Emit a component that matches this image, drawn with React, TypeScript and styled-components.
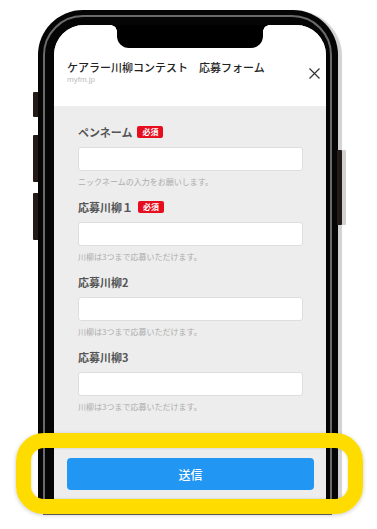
import React from "react";
import styled, { createGlobalStyle } from "styled-components";

const Global = createGlobalStyle`
  html, body { margin: 0; padding: 0; background: #fff; }
  body { font-family: "Noto Sans CJK JP", "Noto Sans", sans-serif; }
  * { box-sizing: border-box; }
`;

const Stage = styled.div`
  position: relative;
  width: 377px;
  height: 529px;
  overflow: hidden;
  padding: 10px 0 0 38px;
`;

const Phone = styled.div`
  position: relative;
  width: 300px;
  height: 495px;
  background: #050505;
  border-radius: 45px 45px 0 0;
  padding: 15px 12px 0 16px;
  box-shadow: 4px 1px 1px #d2d2d2;
  &::before {
    content: "";
    position: absolute;
    inset: 5px 6px -10px 5px;
    border: 2px solid #6a6a6a;
    border-radius: 40px 40px 0 0;
    pointer-events: none;
  }
`;

const SideKey = styled.div<{ $side: "left" | "right"; $top: number; $h: number }>`
  position: absolute;
  top: ${(p) => p.$top}px;
  height: ${(p) => p.$h}px;
  width: 5px;
  background: #231a18;
  ${(p) =>
    p.$side === "left"
      ? "left: -5px; border-radius: 1px 0 0 1px;"
      : "right: -4px; border-radius: 0 1px 1px 0; box-shadow: 4px 0 0 #d0d0d0;"}
`;

const Screen = styled.div`
  position: relative;
  height: 100%;
  background: #ededed;
  border-radius: 30px 30px 0 0;
  overflow: hidden;
  display: flex;
  flex-direction: column;
`;

const Notch = styled.div`
  position: absolute;
  top: 0;
  left: 50%;
  transform: translateX(-50%);
  width: 146px;
  height: 23px;
  background: #000;
  border-radius: 0 0 12px 12px;
  z-index: 2;
  &::before,
  &::after {
    content: "";
    position: absolute;
    top: 0;
    width: 6px;
    height: 6px;
  }
  &::before {
    left: -6px;
    background: radial-gradient(circle at 0 100%, transparent 5.5px, #000 6px);
  }
  &::after {
    right: -6px;
    background: radial-gradient(circle at 100% 100%, transparent 5.5px, #000 6px);
  }
`;

const Header = styled.header`
  height: 81px;
  flex: none;
  background: #fff;
  padding: 35px 6px 0 13px;
`;

const HeaderRow = styled.div`
  display: flex;
  align-items: center;
  justify-content: space-between;
`;

const TitleBlock = styled.div`
  display: flex;
  flex-direction: column;
`;

const Title = styled.h1`
  margin: 0;
  font-size: 11px;
  line-height: 14px;
  font-weight: 500;
  color: #222;
  white-space: nowrap;
`;

const Url = styled.div`
  margin-top: 1px;
  font-family: "Liberation Sans", Arial, sans-serif;
  font-size: 8px;
  line-height: 10px;
  color: #bdbdbd;
`;

const CloseButton = styled.button`
  width: 12px;
  height: 12px;
  padding: 0;
  border: 0;
  background: none;
  display: flex;
  align-items: center;
  justify-content: center;
  margin-top: 2px;
`;

const Form = styled.div`
  padding: 18px 23px 0 24px;
  display: flex;
  flex-direction: column;
  gap: 11px;
`;

const Field = styled.div`
  display: flex;
  flex-direction: column;
`;

const LabelRow = styled.div`
  height: 16px;
  display: flex;
  align-items: center;
  gap: 5px;
  margin-bottom: 7px;
`;

const Label = styled.label`
  font-size: 11px;
  line-height: 16px;
  font-weight: 700;
  color: #555;
`;

const Badge = styled.span`
  height: 12px;
  padding: 0 5px;
  background: #e60d1e;
  color: #fff;
  font-size: 8px;
  line-height: 12px;
  font-weight: 700;
  border-radius: 2px;
`;

const Input = styled.div`
  height: 24px;
  background: #fff;
  border: 1px solid #dedede;
  border-radius: 3px;
`;

const Hint = styled.div`
  margin-top: 5px;
  font-size: 8px;
  line-height: 12px;
  color: #acacac;
`;

const Footer = styled.div`
  margin-top: auto;
  padding: 0 12px 15px 13px;
`;

const SubmitButton = styled.button`
  width: 100%;
  height: 32px;
  border: 0;
  border-radius: 4px;
  background: #2196f3;
  color: #fff;
  font-family: "Noto Sans CJK JP", sans-serif;
  font-size: 12px;
  font-weight: 500;
`;

const Highlight = styled.div`
  position: absolute;
  left: 16px;
  top: 433px;
  width: 347px;
  height: 81px;
  border: 15px solid #ffdc00;
  border-radius: 28px;
  box-shadow: 0 1px 4px rgba(0, 0, 0, 0.22), inset 0 0 3px rgba(0, 0, 0, 0.15);
  pointer-events: none;
`;

type FieldDef = { label: string; required?: boolean; hint: string };

const fields: FieldDef[] = [
  { label: "ペンネーム", required: true, hint: "ニックネームの入力をお願いします。" },
  { label: "応募川柳１", required: true, hint: "川柳は3つまで応募いただけます。" },
  { label: "応募川柳2", hint: "川柳は3つまで応募いただけます。" },
  { label: "応募川柳3", hint: "川柳は3つまで応募いただけます。" },
];

export default function App() {
  return (
    <>
      <Global />
      <Stage>
        <Phone>
          <SideKey $side="left" $top={82} $h={25} />
          <SideKey $side="left" $top={125} $h={47} />
          <SideKey $side="left" $top={183} $h={47} />
          <SideKey $side="right" $top={140} $h={75} />
          <Screen>
            <Notch />
            <Header>
              <HeaderRow>
                <TitleBlock>
                  <Title>ケアラー川柳コンテスト　応募フォーム</Title>
                  <Url>myfm.jp</Url>
                </TitleBlock>
                <CloseButton aria-label="close">
                  <svg width="11" height="11" viewBox="0 0 11 11">
                    <path d="M0.5 0.5 L10.5 10.5 M10.5 0.5 L0.5 10.5" stroke="#333" strokeWidth="1.2" />
                  </svg>
                </CloseButton>
              </HeaderRow>
            </Header>
            <Form>
              {fields.map((f) => (
                <Field key={f.label}>
                  <LabelRow>
                    <Label>{f.label}</Label>
                    {f.required && <Badge>必須</Badge>}
                  </LabelRow>
                  <Input />
                  <Hint>{f.hint}</Hint>
                </Field>
              ))}
            </Form>
            <Footer>
              <SubmitButton>送信</SubmitButton>
            </Footer>
          </Screen>
        </Phone>
        <Highlight />
      </Stage>
    </>
  );
}
